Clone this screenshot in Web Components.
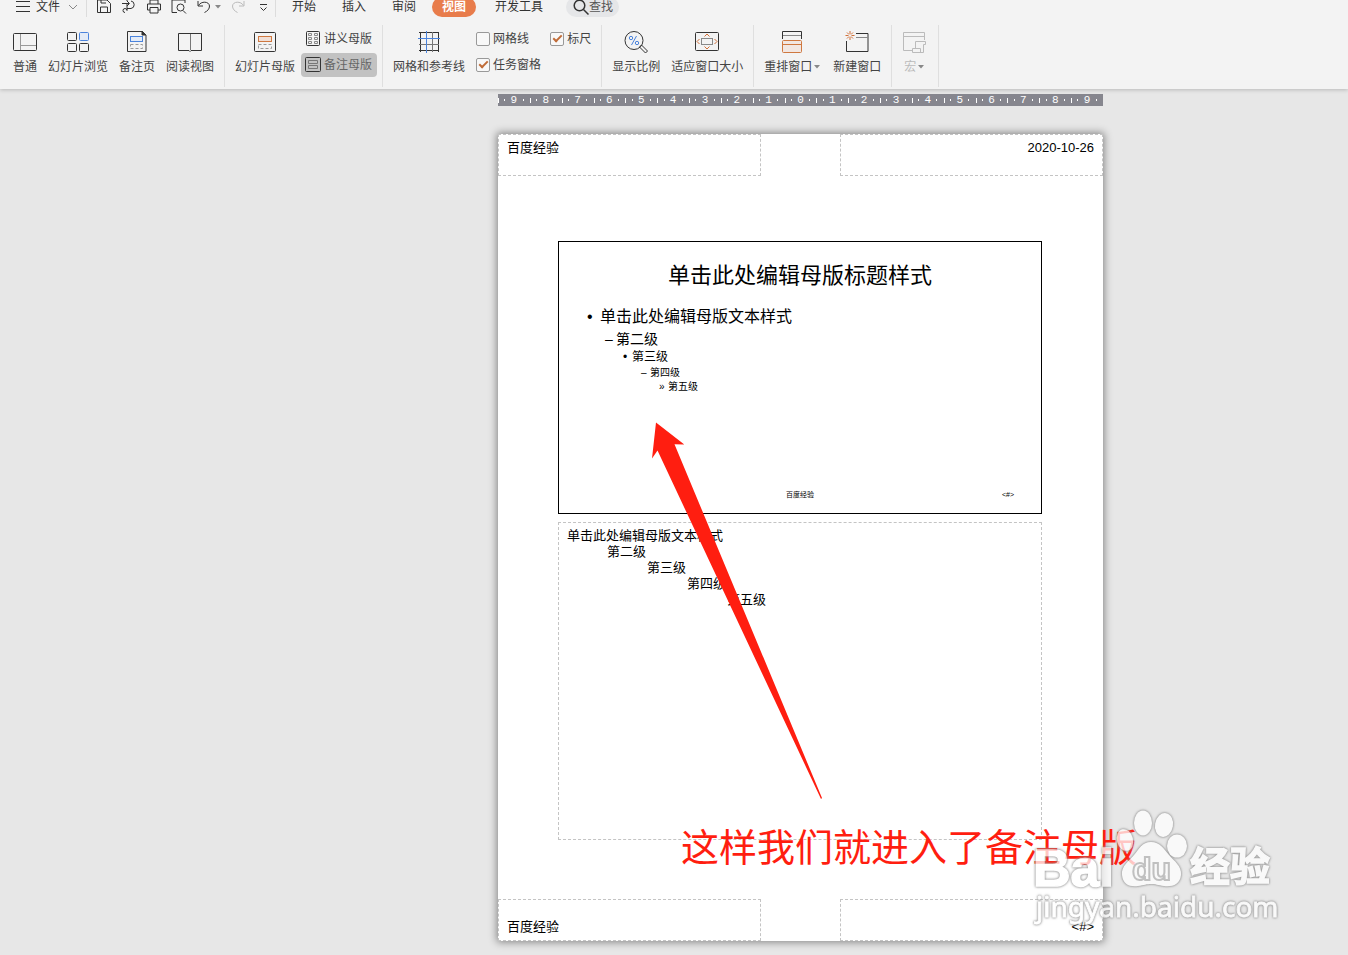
<!DOCTYPE html>
<html lang="zh-CN">
<head>
<meta charset="utf-8">
<title>备注母版</title>
<style>
  body { margin: 0; min-height: 100vh; background: #e7e7e7; color: #444; overflow: hidden;
    font: 12px/16px "Liberation Sans", "Noto Sans CJK SC", sans-serif; }
</style>
</head>
<body>
<office-app></office-app>
<script>
const ICONS = {
  menu: [16, 16, '<path d="M1 2.5h14M1 7.5h14M1 12.5h14"/>'],
  chevron: [10, 16, '<path stroke="#888" d="M1 6l4 4 4-4"/>'],
  caret: [6, 16, '<path fill="#888" stroke="none" d="M0 6h6L3 9.500z"/>'],
  save: [14, 16, '<path d="M1 1h9l3.500 3.500V13.500H.5V1zM3.500 13V8h7v5M4 1v3h5"/>'],
  pdf: [16, 16, '<path d="M4 13.500a2 2 0 1 1 2-2V4.500M6 9.500h4a3.800 3.800 0 0 0 0-7.500M1 4.500h7M6 2l2.500 2.500L6 7M6 2V1"/>'],
  print: [14, 16, '<path d="M3 5V1h8v4M3 11H.5V5h13v6H11M3 8.500h8V14H3z"/>'],
  preview: [16, 16, '<path d="M14 4V1H1v12.500h5M12 11.500l3 3"/><circle cx="9.500" cy="8.500" r="3.500"/>'],
  undo: [14, 16, '<path d="M1 2v5h5M1.500 6.500C4 2 12 2 12.500 7c0 3-2 5-5 6.500"/>'],
  redo: [14, 16, '<path stroke="#bbb" d="M13 2v5H8M12.500 6.500C10 2 2 2 1.500 7c0 3 2 5 5 6.500"/>'],
  more: [13, 16, '<path d="M5 5.500h7M5.500 8.500l3 3 3-3"/>'],
  search: [16, 16, '<circle cx="6.500" cy="6.500" r="5.300" stroke-width="1.500"/><path stroke-width="1.500" d="M10.500 10.500l5 5"/>'],
  normal: [24, 24, '<rect x=".5" y="3.500" width="23" height="17" rx="1"/><path stroke="#999" d="M7.500 4v16M8 15.500h15"/>'],
  sorter: [24, 24, '<rect x="1.500" y="2.500" width="9" height="8" rx="1"/><rect x="13.500" y="2.500" width="9" height="8" rx="1" stroke="#4a83dc" fill="#e3ebf7"/><rect x="1.500" y="13.500" width="9" height="8" rx="1"/><rect x="13.500" y="13.500" width="9" height="8" rx="1"/>'],
  notes: [24, 24, '<path d="M2.500 1.500h15l3.500 3.500v16.500h-18.500z"/><path fill="#333" d="M17 1v4h4z"/><rect x="5.500" y="6.500" width="12" height="5" stroke="#4a83dc" fill="#e3ebf7"/><rect x="5.500" y="14.500" width="12" height="4" stroke="#999" stroke-dasharray="3 2"/>'],
  reading: [24, 24, '<path d="M11 20.500H.5v-17h23v17H13l-1 1z"/><path stroke="#777" d="M12.500 4v16"/>'],
  slidemaster: [24, 24, '<rect x="1.500" y="2.500" width="21" height="19" rx="1"/><rect x="5.500" y="6.500" width="13" height="5" stroke="#cf7840" fill="#f0dfd6"/><rect x="5.500" y="14.500" width="13" height="4" stroke="#999" stroke-dasharray="3 2"/>'],
  handout: [16, 16, '<rect x="1.500" y=".5" width="13" height="14" rx="1"/><path stroke="#888" d="M3.500 2.500h3v2h-3zM9.500 2.500h3v2h-3zM3.500 6.500h3v2h-3zM9.500 6.500h3v2h-3zM3.500 10.500h3v2h-3zM9.500 10.500h3v2h-3z"/>'],
  notesmaster: [16, 16, '<rect x=".5" y=".5" width="15" height="14" rx="1"/><path stroke="#777" d="M3.500 3.500h9v3h-9zM3.500 8.500h9v3h-9z"/>'],
  grid: [24, 24, '<path d="M3.500 2v20M21.500 2v20M2 2.500h20M2 20.500h20"/><path stroke="#777" d="M15.500 2v20M2 14.500h20"/><path stroke="#4a83dc" d="M9.500 1v22M1 8.500h22"/>'],
  zoom: [24, 24, '<circle cx="10" cy="10.500" r="9"/><path d="M15.500 17l2-2 6 6-2 2z"/><path stroke="#4a83dc" d="M12.500 6l-5 9"/><circle cx="7" cy="8" r="1.700" stroke="#4a83dc"/><circle cx="13" cy="13" r="1.700" stroke="#4a83dc"/>'],
  fit: [24, 24, '<rect x=".5" y="2.500" width="23" height="18" rx="1"/><rect x="6.500" y="8.500" width="11" height="6" stroke="#888"/><path stroke="#d06f38" d="M9.500 6.500l2.500-2.500 2.500 2.500M9.500 16.500l2.500 2.500 2.500-2.500M4.500 9L2 11.500 4.500 14M19.500 9l2.500 2.500-2.500 2.500"/>'],
  arrange: [24, 24, '<path d="M2.500 9V1.500h19V9"/><path stroke="#888" d="M3 5.500h18"/><rect x="2.500" y="10.500" width="19" height="12" rx="1" stroke="#cf7840" fill="#f2e7e2"/><path stroke="#cf7840" d="M3 14.500h18"/>'],
  newwin: [24, 24, '<path d="M11 3.500h12v18H1.500V11"/><path stroke="#888" d="M11 7.500h12"/><path stroke="#d06f38" d="M5 1v3M5 7v3M.5 5.500h3M6.500 5.500h3M2 2.500l2 2M6 6.500l2 2M8 2.500l-2 2M4 6.500l-2 2"/>'],
  macro: [24, 24, '<g stroke="#bbb"><path d="M11 20.500H1.500v-18h21V10M2 6.500h20"/><path fill="#f3f3f3" d="M13.500 18.500V11.500h10v3h-2v8h-11v-4h8v4"/></g>']
};

function define(name, html, setup) {
  const template = document.createElement('template');
  template.innerHTML = html;
  customElements.define(name, class extends HTMLElement {
    constructor() {
      super();
      this.attachShadow({ mode: 'open' }).append(template.content.cloneNode(true));
    }
    connectedCallback() { if (setup) setup(this, this.shadowRoot); }
  });
}

define('app-icon', `<style>:host{display:block;flex:none}svg{display:block;fill:none;stroke:#333}</style><div></div>`,
  (el, root) => {
    const [w, h, body] = ICONS[el.getAttribute('name')];
    root.querySelector('div').innerHTML = `<svg width="${w}" height="${h}" viewBox="0 0 ${w} ${h}" aria-hidden="true">${body}</svg>`;
  });

const BUTTON = `button{all:unset;box-sizing:border-box;display:flex;align-items:center;white-space:nowrap;cursor:pointer}`;

define('tool-button', `<style>
  :host{display:block;padding-top:5px}
  ${BUTTON} button{flex-direction:column;gap:5px}
  span{display:flex;gap:2px}
  :host([menu]){margin-right:2px}
  :host([muted]){color:#bbb}
</style><button type="button"><span><slot></slot></span></button>`,
  (el, root) => {
    root.querySelector('button').insertAdjacentHTML('afterbegin', `<app-icon name="${el.getAttribute('icon')}"></app-icon>`);
    if (el.hasAttribute('menu')) root.querySelector('span').insertAdjacentHTML('beforeend', '<app-icon name="caret"></app-icon>');
  });

define('row-button', `<style>
  :host{display:block}
  ${BUTTON} button{height:24px;width:100%;gap:3px;padding:0 5px 0 4px;border-radius:4px}
  :host([selected]) button{background:#c2c2c2;color:#666}
</style><button type="button"><slot name="icon"></slot><slot></slot></button>`);

define('tick-option', `<style>
  :host{display:block}
  label{display:flex;align-items:center;gap:3px;height:24px;white-space:nowrap}
  input{appearance:none;box-sizing:border-box;width:14px;height:14px;margin:0;border:1px solid #999;border-radius:2px;background:#f8f8f8;display:grid;place-items:center}
  input:checked::before{content:"";width:7px;height:3px;margin-bottom:3px;border:solid #c06c38;border-width:0 0 2px 2px;transform:rotate(-45deg)}
</style><label><input type="checkbox"><slot></slot></label>`,
  (el, root) => { root.querySelector('input').checked = el.hasAttribute('checked'); });

define('ribbon-group', `<style>
  :host{display:flex;gap:11px;padding:0 10px;border-right:1px solid #dfdfdf;flex:none}
  :host([tight]){gap:6px;padding-right:5px}
</style><slot></slot>`);

define('ribbon-bar', `<style>
  :host{display:block;background:#f3f3f3}
  nav{display:flex;height:62px;padding:4px 0 2px 3px}
  .stack{padding-top:2px;display:grid;gap:2px;align-content:start}
  .options{grid-template-columns:auto auto;column-gap:9px}
</style><nav aria-label="视图">
  <ribbon-group><tool-button icon="normal">普通</tool-button><tool-button icon="sorter">幻灯片浏览</tool-button><tool-button icon="notes">备注页</tool-button><tool-button icon="reading">阅读视图</tool-button></ribbon-group>
  <ribbon-group tight><tool-button icon="slidemaster">幻灯片母版</tool-button>
    <div class="stack"><row-button><app-icon slot="icon" name="handout"></app-icon>讲义母版</row-button><row-button selected><app-icon slot="icon" name="notesmaster"></app-icon>备注母版</row-button></div></ribbon-group>
  <ribbon-group><tool-button icon="grid">网格和参考线</tool-button>
    <div class="stack options"><tick-option>网格线</tick-option><tick-option checked>标尺</tick-option><tick-option checked>任务窗格</tick-option></div></ribbon-group>
  <ribbon-group><tool-button icon="zoom">显示比例</tool-button><tool-button icon="fit">适应窗口大小</tool-button></ribbon-group>
  <ribbon-group><tool-button icon="arrange" menu>重排窗口</tool-button><tool-button icon="newwin">新建窗口</tool-button></ribbon-group>
  <ribbon-group><tool-button icon="macro" menu muted>宏</tool-button></ribbon-group>
</nav>`);

define('menu-bar', `<style>
  :host{display:block;background:#f3f3f3;color:#333}
  nav{display:flex;align-items:center;height:28px;margin-top:-7px}
  ${BUTTON} button{height:20px;gap:5px}
  .file{padding:0 8px 0 15px}
  .file app-icon:last-child{margin-left:3px}
  .quick{display:flex;align-items:center;gap:10px;padding:0 7px 0 10px;border:solid #dcdcdc;border-width:0 1px}
  .undo{gap:4px}
  .tabs{display:flex;gap:6px;padding:0 13px 0 6px}
  .tabs button{padding:0 10px;border-radius:10px}
  .tabs .active{background:#e87c4b;color:#fff;font-weight:bold;margin-right:3px}
  .search{background:#e5e6e8;border-radius:10px;padding:0 6px 0 7px;gap:0;color:#555}
</style><nav aria-label="菜单">
  <button type="button" class="file"><app-icon name="menu"></app-icon>文件<app-icon name="chevron"></app-icon></button>
  <div class="quick">
    <button type="button" aria-label="保存"><app-icon name="save"></app-icon></button>
    <button type="button" aria-label="输出"><app-icon name="pdf"></app-icon></button>
    <button type="button" aria-label="打印"><app-icon name="print"></app-icon></button>
    <button type="button" aria-label="预览"><app-icon name="preview"></app-icon></button>
    <button type="button" aria-label="撤销" class="undo"><app-icon name="undo"></app-icon><app-icon name="caret"></app-icon></button>
    <button type="button" aria-label="恢复"><app-icon name="redo"></app-icon></button>
    <button type="button" aria-label="更多"><app-icon name="more"></app-icon></button>
  </div>
  <div class="tabs"><button type="button">开始</button><button type="button">插入</button><button type="button">审阅</button><button type="button" class="active">视图</button><button type="button">开发工具</button></div>
  <button type="button" class="search"><app-icon name="search"></app-icon>查找</button>
</nav>`);

define('ruler-bar', `<style>
  :host{display:grid;grid-template-columns:repeat(19,1fr);height:12px;background:#86868e;color:#fff;font:11px/12px "Liberation Mono",monospace}
  div{display:flex;justify-content:space-between;align-items:center}
  i{width:1px;height:5px;background:#fff}
  i.dot{height:2px}
  i.end{visibility:hidden}
</style>`, (el, root) => {
    for (let n = -9; n <= 9; n++) {
      const cell = document.createElement('div');
      cell.innerHTML = `<i></i><i class="dot"></i><span>${Math.abs(n)}</span><i class="dot"></i><i class="end"></i>`;
      root.append(cell);
    }
  });

define('page-field', `<style>
  :host{display:flex;box-sizing:border-box;border:1px dashed #c4c4c4;padding:5px 8px;font-size:13px;color:#000}
</style><slot></slot>`);

define('slide-preview', `<style>
  :host{display:flex;flex-direction:column;box-sizing:border-box;height:273px;border:1px solid #000;color:#000;background:#fff}
  h1{font-size:22px;line-height:32px;font-weight:normal;text-align:center;margin:18px 0 12px}
  ul{list-style:none;margin:0;padding:0}
  li{display:flex}
  li::before{content:attr(data-mark)}
  .l1{font-size:16px;line-height:26px;padding-left:28px}
  .l2{font-size:14px;line-height:18px;padding-left:46px}
  .l3{font-size:12px;line-height:18px;padding-left:64px}
  .l4{font-size:10px;line-height:14px;padding-left:82px}
  .l5{font-size:10px;line-height:14px;padding-left:100px}
  .l1::before{width:13px}.l2::before{width:11px}.l3::before,.l4::before,.l5::before{width:9px}
  footer{margin-top:auto;display:grid;grid-template-columns:1fr auto 1fr;padding:0 27px 10px;font-size:7px;line-height:16px}
  footer span:last-child{text-align:right;grid-column:3}
  footer span:first-child{grid-column:2}
</style>
<h1>单击此处编辑母版标题样式</h1>
<ul><li class="l1" data-mark="•">单击此处编辑母版文本样式</li><li class="l2" data-mark="–">第二级</li><li class="l3" data-mark="•">第三级</li><li class="l4" data-mark="–">第四级</li><li class="l5" data-mark="»">第五级</li></ul>
<footer><span>百度经验</span><span>&lt;#&gt;</span></footer>`);

define('callout-arrow', `<style>:host{position:absolute;pointer-events:none}svg{display:block}</style>
<svg width="172" height="378" viewBox="650 422 172 378"><path fill="#ff1e10" d="M656 422.500L684.300 444.500 674.500 444.300 822 798 821 799 657.500 450.500 652 458.500z"/></svg>`);

define('site-watermark', `<style>
  :host{position:absolute;pointer-events:none;opacity:.75}
  svg{display:block;overflow:visible;fill:#fff;filter:drop-shadow(0 0 1px #777) drop-shadow(0 0 1px #aaa)}
  text{font-family:"Liberation Sans","Noto Sans CJK SC",sans-serif;font-weight:bold}
  .name{stroke:#fff;stroke-width:1.500}
  .url{font-family:"Noto Sans",sans-serif;font-weight:normal;stroke:#fff;stroke-width:.8}
  .du{stroke:#b4b4b4;stroke-width:2}
</style>
<svg width="244" height="116" viewBox="1032 808 244 116">
  <text x="1033" y="886" font-size="52" class="name">Bai</text>
  <ellipse cx="1125" cy="840" rx="8" ry="11" transform="rotate(-14 1125 840)"/>
  <ellipse cx="1143" cy="823" rx="9" ry="12.500"/>
  <ellipse cx="1164" cy="825" rx="9" ry="12" transform="rotate(10 1164 825)"/>
  <ellipse cx="1177" cy="846" rx="10" ry="11.500"/>
  <path d="M1151 842c-9 0-12 7-17 13-5 6-13 11-12 20 1 10 8 12 16 11 6-1 9-2 13-2s7 1 13 2c8 1 16-1 17-11 1-9-7-14-12-20-5-6-9-13-18-13z"/>
  <text class="du" x="1132" y="880" font-size="32">du</text>
  <text x="1190" y="881" font-size="40" class="name">经验</text>
  <text class="url" x="1036" y="917" font-size="28">jingyan.baidu.com</text>
</svg>`);

define('notes-page', `<style>
  :host{display:block;position:relative;width:605px;background:#fff;box-shadow:0 0 8px 1px rgba(0,0,0,.45)}
  .ends{display:flex;justify-content:space-between}
  .ends page-field{width:263px;height:42px}
  .ends page-field:last-child{justify-content:flex-end}
  .foot page-field{align-items:flex-end}
  main{padding:65px 61px 59px 60px;display:grid;gap:8px}
  .notes{height:318px}
  .notes div div{padding-left:40px}
  callout-arrow{left:152px;top:288px}
  p{position:absolute;left:183px;top:690px;margin:0;font-size:38px;line-height:48px;color:#ff1e10;white-space:nowrap}
  site-watermark{left:534px;top:674px}
</style>
<div class="ends"><page-field>百度经验</page-field><page-field>2020-10-26</page-field></div>
<main><slide-preview></slide-preview>
<page-field class="notes"><div>单击此处编辑母版文本样式<div>第二级<div>第三级<div>第四级<div>第五级</div></div></div></div></div></page-field></main>
<div class="ends foot"><page-field>百度经验</page-field><page-field>&lt;#&gt;</page-field></div>
<callout-arrow></callout-arrow><p>这样我们就进入了备注母版</p><site-watermark></site-watermark>`);

define('office-app', `<style>
  :host{display:block}
  header{position:relative;box-shadow:0 1px 4px rgba(0,0,0,.2)}
  section{padding:5px 0 0 253px;display:grid;justify-content:center;gap:28px}
</style>
<header><menu-bar></menu-bar><ribbon-bar></ribbon-bar></header>
<section><ruler-bar></ruler-bar><notes-page></notes-page></section>`);
</script>
</body>
</html>
